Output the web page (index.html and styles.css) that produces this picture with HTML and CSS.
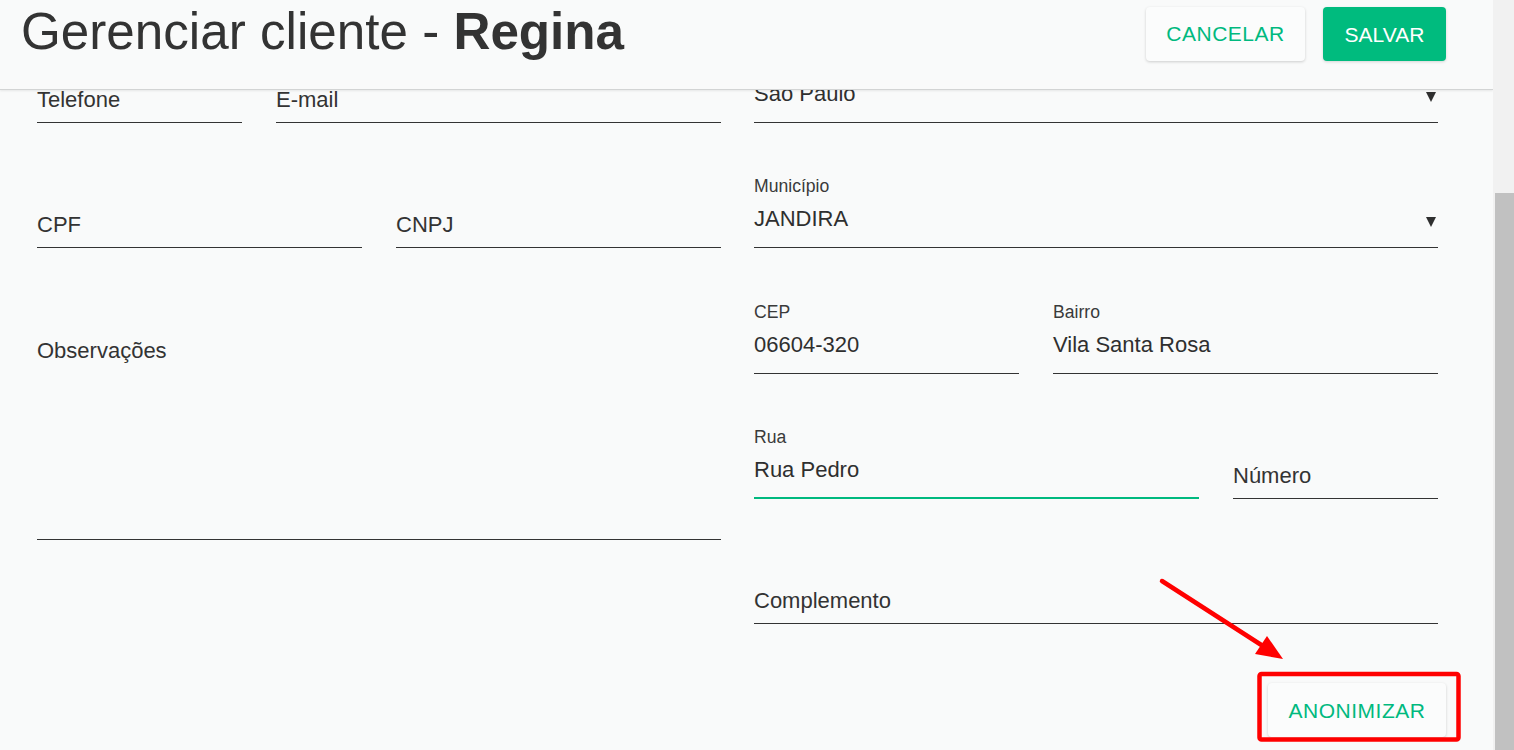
FILE: index.html
```html
<!DOCTYPE html>
<html lang="pt-BR">
<head>
<meta charset="utf-8">
<title>Gerenciar cliente - Regina</title>
<link rel="stylesheet" href="styles.css">
</head>
<body>
<div class="page">
  <div class="main">
    <header class="topbar">
      <h1 class="title">Gerenciar cliente - <b>Regina</b></h1>
      <div class="actions">
        <button class="btn btn-outline btn-cancel">CANCELAR</button>
        <button class="btn btn-primary btn-save">SALVAR</button>
      </div>
    </header>
    <div class="scroll">
      <div class="form">
        <div class="col">
          <div class="row">
            <div class="field w-phone"><div class="ph">Telefone</div></div>
            <div class="field grow"><div class="ph">E-mail</div></div>
          </div>
          <div class="row">
            <div class="field grow"><div class="ph">CPF</div></div>
            <div class="field grow"><div class="ph">CNPJ</div></div>
          </div>
          <div class="row row-obs">
            <div class="field grow obs"><div class="ph">Observações</div></div>
          </div>
        </div>
        <div class="col">
          <div class="row">
            <div class="field grow select"><div class="val"><span>São Paulo</span><i class="caret"></i></div></div>
          </div>
          <div class="row">
            <div class="field grow select"><div class="lbl">Município</div><div class="val"><span>JANDIRA</span><i class="caret"></i></div></div>
          </div>
          <div class="row row-tall">
            <div class="field w-cep"><div class="lbl">CEP</div><div class="val">06604-320</div></div>
            <div class="field grow"><div class="lbl">Bairro</div><div class="val">Vila Santa Rosa</div></div>
          </div>
          <div class="row">
            <div class="field grow focused"><div class="lbl">Rua</div><div class="val">Rua Pedro</div></div>
            <div class="field w-num"><div class="ph">Número</div></div>
          </div>
          <div class="row">
            <div class="field grow"><div class="ph">Complemento</div></div>
          </div>
          <div class="row-actions">
            <button class="btn btn-outline btn-anon">ANONIMIZAR</button>
          </div>
        </div>
      </div>
    </div>
  </div>
  <div class="scrollbar"><div class="thumb"></div></div>
</div>
<svg class="annot" width="1514" height="750" viewBox="0 0 1514 750" xmlns="http://www.w3.org/2000/svg">
  <line x1="1162" y1="581" x2="1266" y2="648" stroke="#ff0000" stroke-width="4.5" stroke-linecap="round"/>
  <polygon points="1283,659 1255,654 1267,636" fill="#ff0000"/>
  <rect x="1259.5" y="674" width="199" height="65.5" rx="2" fill="none" stroke="#ff0000" stroke-width="4.5"/>
</svg>
</body>
</html>
```

FILE: styles.css
```css
html, body {
  margin: 0;
  padding: 0;
  height: 750px;
  overflow: hidden;
  background: #f9fafa;
  font-family: "Liberation Sans", Arial, sans-serif;
  color: #333;
}

.page {
  display: flex;
  height: 750px;
}

.main {
  flex: 1;
  display: flex;
  flex-direction: column;
  min-width: 0;
}

.topbar {
  height: 89px;
  flex: none;
  display: flex;
  justify-content: space-between;
  align-items: flex-start;
  padding: 0 47px 0 21px;
  border-bottom: 1px solid #d2d4d4;
  box-shadow: 0 1px 2px rgba(0, 0, 0, 0.08);
  background: #f9fafa;
}

.title {
  margin: 0;
  padding-top: 3px;
  font-size: 51.2px;
  line-height: 58px;
  font-weight: 400;
  color: #333;
  white-space: nowrap;
}

.title b {
  font-weight: 700;
}

.actions {
  display: flex;
  gap: 18px;
  padding-top: 7px;
}

.btn {
  height: 54px;
  border: none;
  border-radius: 4px;
  font-family: "Liberation Sans", Arial, sans-serif;
  font-size: 21px;
  padding: 0;
  cursor: pointer;
}

.btn-outline {
  background: #fbfcfc;
  color: #00b97f;
  letter-spacing: 0.5px;
  box-shadow: 0 1px 3px rgba(0, 0, 0, 0.18);
}

.btn-primary {
  background: #00bb7e;
  color: #fff;
  box-shadow: 0 1px 3px rgba(0, 0, 0, 0.15);
}

.btn-cancel { width: 159px; }
.btn-save { width: 123px; padding-top: 2px; }
.btn-anon { width: 178px; padding-top: 2px; }

.scroll {
  flex: 1;
  overflow: hidden;
}

.form {
  display: flex;
  gap: 33px;
  padding: 0 55px 0 37px;
  margin-top: -92px;
}

.col {
  flex: 1;
  display: flex;
  flex-direction: column;
  min-width: 0;
}

.row {
  height: 125px;
  display: flex;
  gap: 34px;
  align-items: flex-end;
  flex: none;
}

.row-tall { height: 126px; }
.row-obs { height: 292px; align-items: stretch; }

.field {
  display: flex;
  flex-direction: column;
  border-bottom: 1px solid #333;
  min-width: 0;
}

.grow { flex: 1; }
.w-phone { width: 205px; flex: none; }
.w-cep { width: 265px; flex: none; }
.w-num { width: 205px; flex: none; }

.lbl {
  font-size: 17.6px;
  line-height: 20px;
  margin-bottom: 10px;
  color: #3a3a3a;
}

.val {
  font-size: 22px;
  line-height: 26px;
  padding-bottom: 15px;
  color: #2f2f2f;
  display: flex;
  align-items: center;
  justify-content: space-between;
  white-space: nowrap;
}

.ph {
  font-size: 22px;
  line-height: 18px;
  padding-bottom: 13px;
  color: #333;
}

.obs .ph {
  margin-top: 94px;
}

.focused {
  border-bottom: 2px solid #00b97f;
}

.focused .val {
  padding-bottom: 14px;
}

.caret {
  width: 0;
  height: 0;
  border-left: 5px solid transparent;
  border-right: 5px solid transparent;
  border-top: 10px solid #2f2f2f;
  margin-right: 2px;
  margin-top: 5px;
}

.row-actions {
  display: flex;
  justify-content: flex-end;
  margin-top: 59px;
  margin-right: -8px;
}

.scrollbar {
  width: 21px;
  flex: none;
  background: #f1f1f1;
  display: flex;
  flex-direction: column;
}

.thumb {
  margin-top: 193px;
  margin-left: 2px;
  flex: 1;
  background: #c1c1c1;
}

.annot {
  position: absolute;
  left: 0;
  top: 0;
  pointer-events: none;
}
```
